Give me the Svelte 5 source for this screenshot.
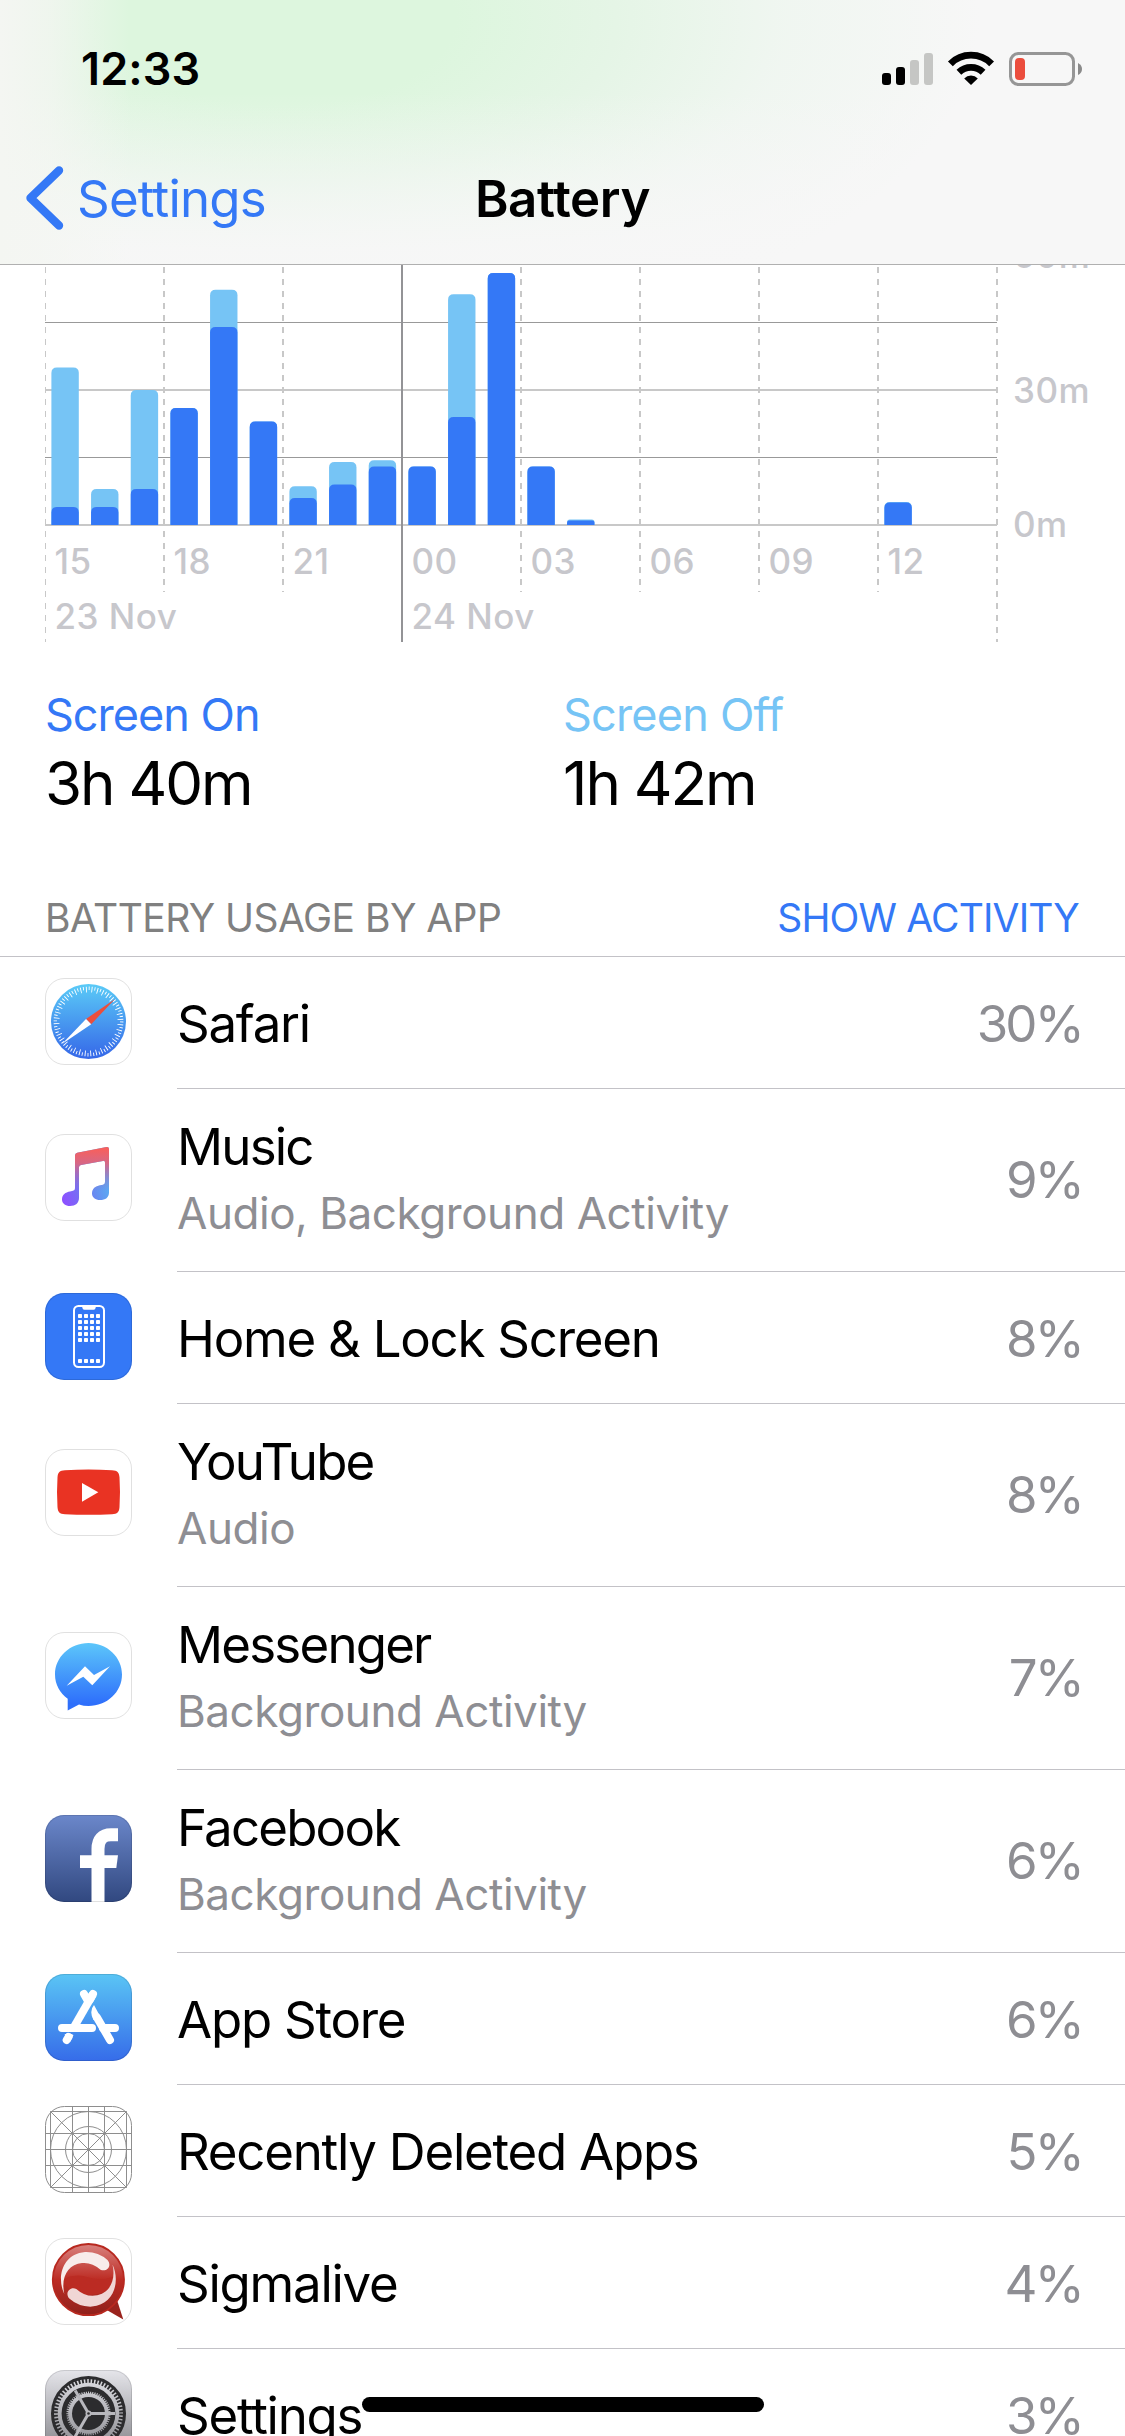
<script>
    const HOUR_WIDTH = 119 / 3;
    const MINUTE_HEIGHT = 4.5;
    const BASELINE = 260;

    // minutes per hour, starting at 15:00
    const usage = [
        { hour: 0, total: 35, on: 4 },
        { hour: 1, total: 8, on: 4 },
        { hour: 2, total: 30, on: 8 },
        { hour: 3, total: 26, on: 26 },
        { hour: 4, total: 52.3, on: 44 },
        { hour: 5, total: 23, on: 23 },
        { hour: 6, total: 8.6, on: 6 },
        { hour: 7, total: 14, on: 9 },
        { hour: 8, total: 14.4, on: 13 },
        { hour: 9, total: 13, on: 13 },
        { hour: 10, total: 51.3, on: 24 },
        { hour: 11, total: 56, on: 56 },
        { hour: 12, total: 13, on: 13 },
        { hour: 13, total: 1.2, on: 1 },
        { hour: 21, total: 5.1, on: 5 }
    ];

    const ticks = ['15', '18', '21', '00', '03', '06', '09', '12'];

    const apps = [
        { name: 'Safari', percent: 30, icon: 'safari' },
        { name: 'Music', detail: 'Audio, Background Activity', percent: 9, icon: 'music' },
        { name: 'Home & Lock Screen', percent: 8, icon: 'home' },
        { name: 'YouTube', detail: 'Audio', percent: 8, icon: 'youtube' },
        { name: 'Messenger', detail: 'Background Activity', percent: 7, icon: 'messenger' },
        { name: 'Facebook', detail: 'Background Activity', percent: 6, icon: 'facebook' },
        { name: 'App Store', percent: 6, icon: 'appstore' },
        { name: 'Recently Deleted Apps', percent: 5, icon: 'deleted' },
        { name: 'Sigmalive', percent: 4, icon: 'sigma' },
        { name: 'Settings', percent: 3, icon: 'settings' }
    ];

    // grid lines of the placeholder icon: offset and inset from the edge
    const gridLines = [[5.5, 5.5], [27.5, 0], [43.5, 0], [59.5, 0], [81.5, 5.5]];

    // bar with rounded top corners only
    function bar(hour, minutes) {
        const x = 51.4 + hour * HOUR_WIDTH;
        const h = minutes * MINUTE_HEIGHT;
        const r = Math.min(5.5, h / 2);
        return `M${x} ${BASELINE}v${-(h - r)}q0 ${-r} ${r} ${-r}h${27.4 - 2 * r}q${r} 0 ${r} ${r}v${h - r}z`;
    }
</script>

<div class="screen">
    <header>
        <div class="status">
            <span class="time">12:33</span>
            <svg class="indicators" width="202" height="36" viewBox="0 0 202 36">
                <rect x="0" y="22" width="9" height="12" rx="3" />
                <rect x="14" y="16" width="9" height="18" rx="3" />
                <rect x="28" y="9" width="9" height="25" rx="3" fill="#c5c6c4" />
                <rect x="42" y="2" width="9" height="32" rx="3" fill="#c5c6c4" />
                <g fill="none" stroke="#000" stroke-width="6.8">
                    <path d="M68.4 12.8a29 29 0 0 1 41.2 0" />
                    <path d="M76.9 21.3a17.4 17.4 0 0 1 24.2 0" />
                </g>
                <path d="M82.2 27.4a9.5 9.5 0 0 1 13.6 0L89 34z" />
                <rect x="128.5" y="2.5" width="63" height="31" rx="8" fill="none" stroke="#969696" stroke-width="3" />
                <rect x="133" y="7" width="10" height="22" rx="4" fill="#eb4d3d" />
                <path d="M196 12q4 2 4 6t-4 6z" fill="#8a8a8a" />
            </svg>
        </div>
        <nav>
            <a class="back" href="#settings">
                <svg width="38" height="66" viewBox="0 0 38 66"><path d="M33 5.5 4.5 33 33 60.5" fill="none" stroke="#3478f6" stroke-width="8.4" stroke-linecap="round" stroke-linejoin="round" /></svg>
                <span>Settings</span>
            </a>
            <h1>Battery</h1>
        </nav>
    </header>

    <svg class="chart" width="1125" height="395" viewBox="0 0 1125 395">
        <g shape-rendering="crispEdges">
            <path d="M45 57.5H997M45 192.5H997" stroke="#999" />
            <path d="M45 125H997M45 260H997" stroke="#c8c8c8" stroke-width="2" />
            {#each ticks as tick, i}
                {#if tick !== '00'}
                    <line x1={i === 0 ? 45.5 : 45 + i * 119} x2={i === 0 ? 45.5 : 45 + i * 119} y1="2" y2={i === 0 ? 377 : 327} class="dash" class:thin={i === 0} />
                {/if}
            {/each}
            <line x1="997" x2="997" y1="2" y2="377" class="dash" />
            <line x1="402" x2="402" y1="0" y2="377" stroke="#939396" stroke-width="2" />
        </g>
        {#each usage as { hour, total, on }}
            <path d={bar(hour, total)} fill="#76c4f5" />
            <path d={bar(hour, on)} fill="#3478f6" />
        {/each}
        <g class="labels">
            {#each ticks as tick, i}
                <text x={54.5 + i * 119} y="309">{tick}</text>
            {/each}
            <text x="54.5" y="364">23 Nov</text>
            <text x="411.5" y="364">24 Nov</text>
            <text x="1013" y="3">60m</text>
            <text x="1013" y="138">30m</text>
            <text x="1013" y="272">0m</text>
        </g>
    </svg>

    <section class="totals">
        <div>
            <h2 class="on">Screen On</h2>
            <p>3h 40m</p>
        </div>
        <div>
            <h2 class="off">Screen Off</h2>
            <p>1h 42m</p>
        </div>
    </section>

    <div class="section-head">
        <span>BATTERY USAGE BY APP</span>
        <a href="#activity">SHOW ACTIVITY</a>
    </div>

    <ul>
        {#each apps as app}
            <li class:tall={app.detail}>
                <svg class="icon" width="87" height="87" viewBox="0 0 87 87">
                    {#if app.icon === 'safari'}
                        <linearGradient id="sf" x2="0" y2="1"><stop stop-color="#5bcbf7" /><stop offset="1" stop-color="#3567e8" /></linearGradient>
                        <circle cx="43.5" cy="43.5" r="37.5" fill="url(#sf)" />
                        <circle cx="43.5" cy="43.5" r="33.2" fill="none" stroke="#fff" stroke-width="3.4" stroke-dasharray="0.9 4.894" />
                        <circle cx="43.5" cy="43.5" r="32" fill="none" stroke="#fff" stroke-width="5.8" stroke-dasharray="0.9 4.685" stroke-dashoffset="2.79" />
                        <path d="M70 21 41 41l5.2 5.2z" fill="#eb4e3d" />
                        <path d="M17 66 41 41l5.2 5.2z" fill="#fff" />
                    {:else if app.icon === 'music'}
                        <linearGradient id="mu" x1=".1" y1="1" x2=".95" y2=".55"><stop stop-color="#8c52ff" /><stop offset=".45" stop-color="#6f78f0" /><stop offset="1" stop-color="#58aef2" /></linearGradient>
                        <linearGradient id="mt" x2="0" y2="1"><stop offset=".05" stop-color="#f5605f" /><stop offset=".28" stop-color="#dc6580" stop-opacity=".95" /><stop offset=".75" stop-color="#a060d0" stop-opacity="0" /></linearGradient>
                        {#each ['url(#mu)', 'url(#mt)'] as fill}
                            <path {fill} d="M30 21.5q0-2.2 2.2-2.7L61.5 13Q64 12.5 64 15v43.5c0 5-3.5 7.5-9 7.5-4.5 0-8-2.5-8-6.5 0-5 3.5-7.3 8-8.2l3-.6q2-.5 2-2.7V28.5q0-2-2-1.6L36 31q-2 .4-2 2.2V64c0 5-3.5 8-9 8-4.5 0-8-2.5-8-6.5 0-5 3.5-7.3 8-8.1l3-.6q2-.5 2-2.5z" />
                        {/each}
                    {:else if app.icon === 'home'}
                        <rect width="87" height="87" rx="19" fill="#3478f6" />
                        <rect x="29" y="13" width="30" height="61" rx="4.5" fill="none" stroke="#fff" stroke-width="2" />
                        <path d="M36 13.5h16q-1.5 0-1.5 1.5 0 1.8-1.8 1.8h-9.4q-1.8 0-1.8-1.8 0-1.5-1.5-1.5z" fill="#fff" />
                        {#each [21, 27, 33, 39, 45, 66] as y}
                            {#each [33, 39, 45, 51] as x}
                                <rect {x} {y} width="4" height="4" rx=".8" fill="#fff" />
                            {/each}
                        {/each}
                    {:else if app.icon === 'youtube'}
                        <path d="M20 21.2q23.5-1.2 47 0c5.5.2 7 2 7.5 7q1 15 0 30c-.5 5-2 6.8-7.5 7q-23.5 1.2-47 0c-5.5-.2-7-2-7.5-7q-1-15 0-30c.5-5 2-6.8 7.5-7z" fill="#e93323" />
                        <path d="M37 34v18.7L53.3 43.3z" fill="#fff" />
                    {:else if app.icon === 'messenger'}
                        <linearGradient id="me" x2="0" y2="1"><stop stop-color="#5cc6fa" /><stop offset=".9" stop-color="#2e6ffb" /></linearGradient>
                        <path d="M43.5 11C25 11 10 25 10 42.5c0 10 5 18.5 12.7 24.2v11.7L34 72.5q4.5 1.5 9.5 1.5C62 74 77 60 77 42.5S62 11 43.5 11z" fill="url(#me)" />
                        <path d="M21.7 53.7 40 34.3l9 8.7 16-8.7-17.7 19-9-8.6z" fill="#fff" />
                    {:else if app.icon === 'facebook'}
                        <linearGradient id="fb" x2="0" y2="1"><stop stop-color="#6b87ca" /><stop offset="1" stop-color="#314880" /></linearGradient>
                        <rect width="87" height="87" rx="19" fill="url(#fb)" />
                        <path d="M53 87V34Q53 19.7 66 19.7H73" fill="none" stroke="#fff" stroke-width="13" />
                        <path d="M35 40.3h38L71.3 53H35z" fill="#fff" />
                    {:else if app.icon === 'appstore'}
                        <linearGradient id="as" x2="0" y2="1"><stop stop-color="#5ac5f5" /><stop offset="1" stop-color="#366ce9" /></linearGradient>
                        <rect width="87" height="87" rx="19" fill="url(#as)" />
                        <g fill="none" stroke="#fff" stroke-width="8" stroke-linecap="round">
                            <path d="M17 54H47M58 54H70M39 20l4 7M48 20 45 25.5" />
                            <path d="M48 20 29 53" stroke-linecap="butt" />
                            <path d="M52 43.5 65 66M21.7 66l1.8-3" />
                        </g>
                        <path d="M49 31 56 44l-7.5 2Q43.8 37 49 31zM19.5 60.5q4-2.2 9 .5l-3.5 7z" fill="#fff" />
                    {:else if app.icon === 'deleted'}
                        <g fill="none" stroke="#8e8e8e">
                            {#each gridLines as [at, inset]}
                                <path d="M{at} {inset}V{87 - inset}M{inset} {at}H{87 - inset}" />
                            {/each}
                            <path d="M5.5 5.5l76 76M81.5 5.5l-76 76" />
                            <circle cx="43.5" cy="43.5" r="38" />
                            <circle cx="43.5" cy="43.5" r="23" />
                            <circle cx="43.5" cy="43.5" r="16" />
                        </g>
                    {:else if app.icon === 'sigma'}
                        <linearGradient id="sg" x2="0" y2="1"><stop stop-color="#d9827f" /><stop offset=".5" stop-color="#bd2c24" /><stop offset="1" stop-color="#8f211c" /></linearGradient>
                        <path d="M72 62 78.3 81.5 60 71z" fill="#9a231d" />
                        <circle cx="43.4" cy="41.6" r="35.6" fill="url(#sg)" stroke="#b8281f" stroke-width="1.8" />
                        <path d="M18.5 41Q31 35 44 39.5q12 4 25-1 0 18-25.5 18.5Q23 57 18.5 41z" fill="#bb2b23" />
                        <path d="M19.3 56C11.5 40 17 16 40 14q13-.5 22.5 8c5 6-1 12.5-7 9.7Q47 24 37 25C23 26.5 15.5 39 19.3 56z" fill="#f8eceb" />
                        <path transform="rotate(180 43.4 41.3)" d="M19.3 56C11.5 40 17 16 40 14q13-.5 22.5 8c5 6-1 12.5-7 9.7Q47 24 37 25C23 26.5 15.5 39 19.3 56z" fill="#f0d6d5" />
                    {:else if app.icon === 'settings'}
                        <linearGradient id="st" x2="0" y2="1"><stop stop-color="#e5e5ea" /><stop offset="1" stop-color="#808085" /></linearGradient>
                        <rect width="87" height="87" rx="19" fill="url(#st)" />
                        <g fill="none" stroke="#2c2c2e">
                            <circle cx="43.5" cy="43.5" r="36" stroke-width="3" />
                            <circle cx="43.5" cy="43.5" r="33" stroke-width="4.6" stroke-dasharray="1.9 1.556" />
                            <circle cx="43.5" cy="43.5" r="24.5" stroke-width="4.8" />
                            <circle cx="43.5" cy="43.5" r="21.5" stroke-width="2.5" stroke-dasharray="1.1 1.15" />
                        </g>
                        <circle cx="43.5" cy="43.5" r="16.5" fill="#2c2c2e" />
                        <path d="M43.5 43.5H70M43.5 43.5 30.2 20.5M43.5 43.5 30.2 66.5" stroke="#b8b8bd" stroke-width="3" />
                        <circle cx="43.5" cy="43.5" r="3" fill="#b8b8bd" />
                        <circle cx="43.5" cy="43.5" r="1.3" fill="#2c2c2e" />
                    {/if}
                    <rect x=".5" y=".5" width="86" height="86" rx="19" fill="none" stroke={app.icon === 'deleted' ? '#8e8e8e' : '#000'} stroke-opacity={app.icon === 'deleted' ? 1 : 0.12} />
                </svg>
                <div class="row">
                    <div class="label">
                        <span class="name">{app.name}</span>
                        {#if app.detail}
                            <span class="detail">{app.detail}</span>
                        {/if}
                    </div>
                    <span class="percent">{app.percent}%</span>
                </div>
            </li>
        {/each}
    </ul>

    <div class="home-bar"></div>
</div>

<style>
    :global(body) { background: #fff; }

    .screen {
        position: relative;
        width: 1125px;
        height: 2436px;
        overflow: hidden;
        background: #fff;
        font-family: Inter, "Liberation Sans", sans-serif;
        color: #000;
    }

    a { color: #3478f6; text-decoration: none; }
    h1, h2, p, ul { margin: 0; padding: 0; font-weight: 400; }

    header {
        box-sizing: border-box;
        height: 265px;
        border-bottom: 1px solid #b0b0b0;
        background:
            linear-gradient(to right, #f4f6f2 0, rgba(244, 246, 242, 0.75) 50px, rgba(244, 246, 242, 0) 130px),
            linear-gradient(to bottom, rgba(247, 247, 247, 0) 35%, rgba(247, 247, 247, 0.9) 95%),
            radial-gradient(ellipse 700px 340px at 280px 20px, #ddf6de 25%, #e5f5e6 48%, rgba(238, 246, 239, 0.8) 72%, rgba(247, 247, 247, 0) 100%),
            #f7f7f7;
    }

    .status { display: flex; justify-content: space-between; align-items: center; height: 132px; padding: 5px 41px 0 81px; box-sizing: border-box; }
    .time { font-size: 45px; font-weight: 600; letter-spacing: 0.1px; }
    .indicators { display: block; }

    nav { display: grid; grid-template-columns: 1fr auto 1fr; align-items: center; height: 132px; padding: 0 26px; }
    .back { display: flex; align-items: center; gap: 13px; font-size: 51px; letter-spacing: -0.8px; }
    h1 { font-size: 51px; font-weight: 600; letter-spacing: -0.4px; }

    .chart { display: block; }
    .dash { stroke: #c8c8c8; stroke-width: 2; stroke-dasharray: 6 6; }
    .thin { stroke-width: 1; }
    .labels { font-size: 35px; font-weight: 500; letter-spacing: 0.5px; fill: #c7c7cc; }

    .totals { display: grid; grid-template-columns: 518px 1fr; padding: 25px 45px 0; }
    .totals h2 { font-size: 45px; line-height: 60px; letter-spacing: -1px; }
    .totals h2.off { letter-spacing: -0.8px; }
    .totals p { font-size: 60px; line-height: 76px; letter-spacing: -2px; }
    .on { color: #3478f6; }
    .off { color: #76c4f5; }

    .section-head {
        box-sizing: border-box;
        display: flex;
        justify-content: space-between;
        align-items: flex-end;
        height: 136px;
        padding: 0 46px 14px 45px;
        border-bottom: 1px solid #c3c2c7;
        font-size: 39px;
        line-height: 48px;
        letter-spacing: -0.55px;
        color: #808080;
    }
    .section-head a { letter-spacing: -0.85px; }

    ul { list-style: none; }
    li { display: flex; height: 132px; padding-left: 45px; gap: 45px; align-items: center; }
    li.tall { height: 183px; }
    .icon { display: block; flex: none; margin-top: -3px; }
    .tall .icon { margin-top: -6px; }
    .row {
        box-sizing: border-box;
        flex: 1;
        align-self: stretch;
        display: flex;
        justify-content: space-between;
        align-items: center;
        padding: 2px 43px 0 0;
        border-bottom: 1px solid #c3c2c7;
    }
    .tall .row { padding: 0 43px 1px 0; }
    .label { display: flex; flex-direction: column; gap: 3px; }
    .name { font-size: 51px; line-height: 64px; letter-spacing: -1.25px; }
    .tall .name { letter-spacing: -1.8px; }
    .detail { font-size: 44px; line-height: 62px; color: #8e8e93; letter-spacing: -0.45px; }
    .percent { font-size: 51px; color: #8e8e93; letter-spacing: -2.8px; }

    .home-bar { position: absolute; left: 362px; top: 2397px; width: 402px; height: 15px; border-radius: 8px; background: #000; }
</style>
